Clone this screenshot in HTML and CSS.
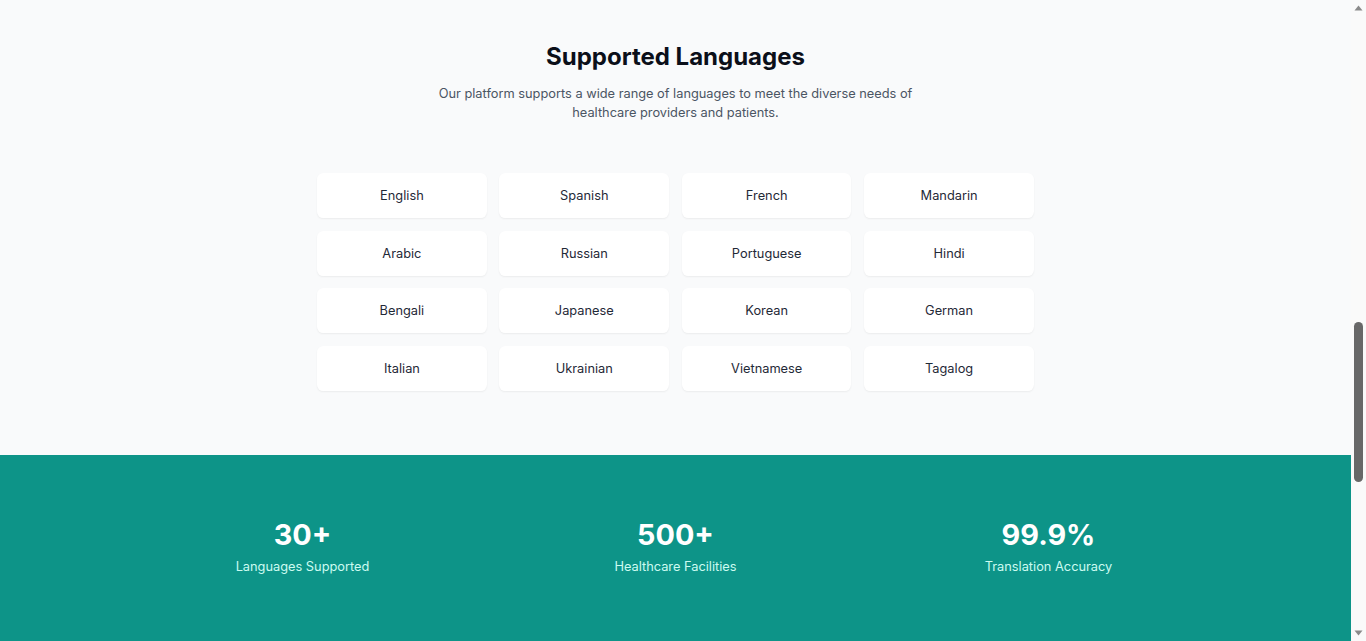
FILE: index.html
```html
<!DOCTYPE html>
<html lang="en">
<head>
<meta charset="utf-8">
<title>Supported Languages</title>
<link rel="stylesheet" href="styles.css">
</head>
<body>
<div class="viewport">
  <main class="page">
    <section class="languages">
      <h2 class="title">Supported Languages</h2>
      <p class="lead">Our platform supports a wide range of languages to meet the diverse needs of healthcare providers and patients.</p>
      <div class="lang-grid">
        <div class="lang">English</div>
        <div class="lang">Spanish</div>
        <div class="lang">French</div>
        <div class="lang">Mandarin</div>
        <div class="lang">Arabic</div>
        <div class="lang">Russian</div>
        <div class="lang">Portuguese</div>
        <div class="lang">Hindi</div>
        <div class="lang">Bengali</div>
        <div class="lang">Japanese</div>
        <div class="lang">Korean</div>
        <div class="lang">German</div>
        <div class="lang">Italian</div>
        <div class="lang">Ukrainian</div>
        <div class="lang">Vietnamese</div>
        <div class="lang">Tagalog</div>
      </div>
    </section>
    <section class="stats">
      <div class="stats-grid">
        <div class="stat"><div class="num">30+</div><div class="label">Languages Supported</div></div>
        <div class="stat"><div class="num">500+</div><div class="label">Healthcare Facilities</div></div>
        <div class="stat"><div class="num">99.9%</div><div class="label">Translation Accuracy</div></div>
      </div>
    </section>
  </main>
  <aside class="scrollbar" aria-hidden="true">
    <div class="sb-btn"><svg width="15" height="15" viewBox="0 0 15 15"><polygon points="3.5,10.5 11.5,10.5 7.5,5.5" fill="#8a8a8a"/></svg></div>
    <div class="sb-track"><div class="sb-thumb"></div></div>
    <div class="sb-btn"><svg width="15" height="15" viewBox="0 0 15 15"><polygon points="3.5,4.5 11.5,4.5 7.5,9.5" fill="#8a8a8a"/></svg></div>
  </aside>
</div>
</body>
</html>
```
FILE: styles.css
```css
* { box-sizing: border-box; }
html, body { margin: 0; padding: 0; }
body {
  font-family: Inter, "Noto Sans", sans-serif;
  background: #f9fafb;
  color: #111827;
}
.viewport {
  display: flex;
  height: 641px;
  overflow: hidden;
}
.page {
  flex: 1;
  min-width: 0;
  overflow: hidden;
}
.languages {
  padding: 43px 16px 64px;
  background: #f9fafb;
  text-align: center;
}
.title {
  margin: 0;
  font-size: 24px;
  line-height: 28.8px;
  font-weight: 700;
  color: #0b0f19;
}
.lead {
  margin: 12px auto 0;
  max-width: 537.6px;
  font-size: 12.8px;
  line-height: 19.2px;
  color: #4b5563;
}
.lang-grid {
  margin: 51px auto 0;
  width: 716.8px;
  display: grid;
  grid-template-columns: repeat(4, 1fr);
  gap: 12.8px;
}
.lang {
  background: #fff;
  border-radius: 6.4px;
  box-shadow: 0 1px 2px 0 rgba(0,0,0,0.06);
  padding: 12.8px;
  font-size: 12.8px;
  line-height: 19.2px;
  color: #1f2937;
}
.stats {
  background: #0d9488;
  padding: 64px 0 72px;
}
.stats-grid {
  width: 1119px;
  margin: 0 auto;
  display: grid;
  grid-template-columns: repeat(3, 1fr);
  text-align: center;
}
.num {
  font-size: 28.8px;
  line-height: 32px;
  font-weight: 700;
  color: #fff;
}
.label {
  margin-top: 6.4px;
  font-size: 12.8px;
  line-height: 19.2px;
  color: #ccfbf1;
}
.scrollbar {
  width: 15px;
  flex: none;
  background: #fafafa;
  display: flex;
  flex-direction: column;
}
.sb-btn { height: 15px; flex: none; }
.sb-btn svg { display: block; }
.sb-track { flex: 1; }
.sb-thumb {
  margin: 307px 0 0 3px;
  width: 9px;
  height: 160px;
  border-radius: 4.5px;
  background: #686868;
}
```
